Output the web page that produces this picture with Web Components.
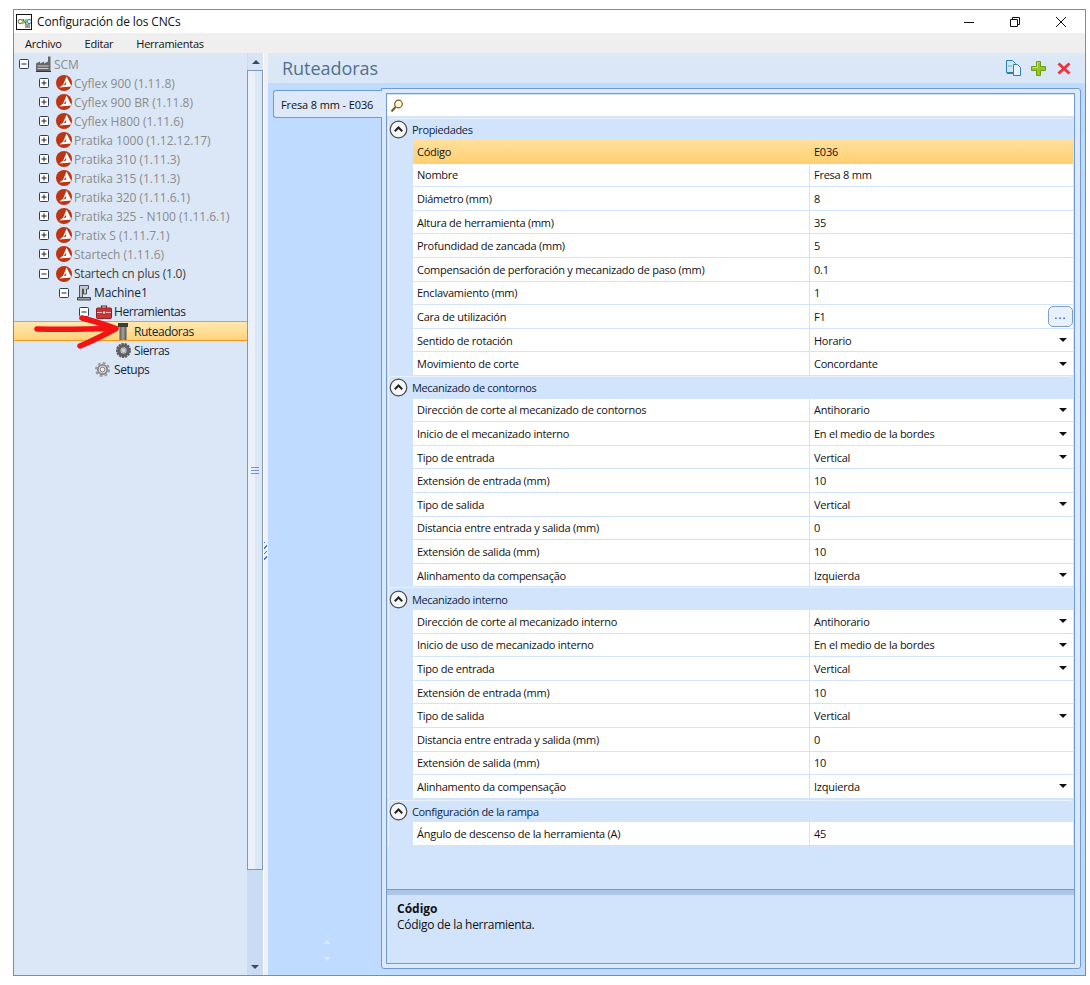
<!DOCTYPE html>
<html lang="es"><head><meta charset="utf-8"><title>Configuración de los CNCs</title>
<style>
html,body{margin:0;padding:0;background:#fff;overflow:hidden}
body{font-family:"Open Sans","Noto Sans","Liberation Sans",sans-serif;font-size:11px;color:#111}
</style></head><body>
<x-window>
  <x-titlebar slot="title">Configuración de los CNCs</x-titlebar>
  <x-menubar slot="menu"><span>Archivo</span><span>Editar</span><span>Herramientas</span></x-menubar>
  <x-tree slot="left">
    <x-node level="0" exp="minus" icon="factory" tone="off">SCM</x-node>
    <x-node level="1" exp="plus" icon="logo" tone="off">Cyflex 900 (1.11.8)</x-node>
    <x-node level="1" exp="plus" icon="logo" tone="off">Cyflex 900 BR (1.11.8)</x-node>
    <x-node level="1" exp="plus" icon="logo" tone="off">Cyflex H800 (1.11.6)</x-node>
    <x-node level="1" exp="plus" icon="logo" tone="off">Pratika 1000 (1.12.12.17)</x-node>
    <x-node level="1" exp="plus" icon="logo" tone="off">Pratika 310 (1.11.3)</x-node>
    <x-node level="1" exp="plus" icon="logo" tone="off">Pratika 315 (1.11.3)</x-node>
    <x-node level="1" exp="plus" icon="logo" tone="off">Pratika 320 (1.11.6.1)</x-node>
    <x-node level="1" exp="plus" icon="logo" tone="off">Pratika 325 - N100 (1.11.6.1)</x-node>
    <x-node level="1" exp="plus" icon="logo" tone="off">Pratix S (1.11.7.1)</x-node>
    <x-node level="1" exp="plus" icon="logo" tone="off">Startech (1.11.6)</x-node>
    <x-node level="1" exp="minus" icon="logo" tone="mid">Startech cn plus (1.0)</x-node>
    <x-node level="2" exp="minus" icon="machine">Machine1</x-node>
    <x-node level="3" exp="minus" icon="toolbox">Herramientas</x-node>
    <x-node level="4" icon="bit" selected>Ruteadoras</x-node>
    <x-node level="4" icon="saw">Sierras</x-node>
    <x-node level="3" icon="gear">Setups</x-node>
  </x-tree>
  <x-scrollbar slot="scroll"></x-scrollbar>
  <x-content slot="right" heading="Ruteadoras">
    <x-tab slot="tab">Fresa 8 mm - E036</x-tab>
    <x-group heading="Propiedades">
      <x-row selected>Código<span slot="value">E036</span></x-row>
      <x-row>Nombre<span slot="value">Fresa 8 mm</span></x-row>
      <x-row>Diámetro (mm)<span slot="value">8</span></x-row>
      <x-row>Altura de herramienta (mm)<span slot="value">35</span></x-row>
      <x-row>Profundidad de zancada (mm)<span slot="value">5</span></x-row>
      <x-row>Compensación de perforación y mecanizado de paso (mm)<span slot="value">0.1</span></x-row>
      <x-row>Enclavamiento (mm)<span slot="value">1</span></x-row>
      <x-row more>Cara de utilización<span slot="value">F1</span></x-row>
      <x-row drop>Sentido de rotación<span slot="value">Horario</span></x-row>
      <x-row drop>Movimiento de corte<span slot="value">Concordante</span></x-row>
    </x-group>
    <x-group heading="Mecanizado de contornos">
      <x-row drop>Dirección de corte al mecanizado de contornos<span slot="value">Antihorario</span></x-row>
      <x-row drop>Inicio de el mecanizado interno<span slot="value">En el medio de la bordes</span></x-row>
      <x-row drop>Tipo de entrada<span slot="value">Vertical</span></x-row>
      <x-row>Extensión de entrada (mm)<span slot="value">10</span></x-row>
      <x-row drop>Tipo de salida<span slot="value">Vertical</span></x-row>
      <x-row>Distancia entre entrada y salida (mm)<span slot="value">0</span></x-row>
      <x-row>Extensión de salida (mm)<span slot="value">10</span></x-row>
      <x-row drop>Alinhamento da compensação<span slot="value">Izquierda</span></x-row>
    </x-group>
    <x-group heading="Mecanizado interno">
      <x-row drop>Dirección de corte al mecanizado interno<span slot="value">Antihorario</span></x-row>
      <x-row drop>Inicio de uso de mecanizado interno<span slot="value">En el medio de la bordes</span></x-row>
      <x-row drop>Tipo de entrada<span slot="value">Vertical</span></x-row>
      <x-row>Extensión de entrada (mm)<span slot="value">10</span></x-row>
      <x-row drop>Tipo de salida<span slot="value">Vertical</span></x-row>
      <x-row>Distancia entre entrada y salida (mm)<span slot="value">0</span></x-row>
      <x-row>Extensión de salida (mm)<span slot="value">10</span></x-row>
      <x-row drop>Alinhamento da compensação<span slot="value">Izquierda</span></x-row>
    </x-group>
    <x-group heading="Configuración de la rampa" style="margin-top:.8px">
      <x-row>Ángulo de descenso de la herramienta (A)<span slot="value">45</span></x-row>
    </x-group>
    <x-desc slot="desc" heading="Código">Código de la herramienta.</x-desc>
  </x-content>
</x-window>
<script>
const FONT='"Open Sans","Noto Sans","Liberation Sans",sans-serif';
function comp(name,html){
  customElements.define(name,class extends HTMLElement{
    constructor(){super();this.attachShadow({mode:'open'}).innerHTML=typeof html==='function'?'':html;}
    connectedCallback(){ if(typeof html==='function') this.shadowRoot.innerHTML=html(this); }
  });
}
const ICONS={
factory:`<svg width="18" height="16" viewBox="0 0 18 16"><path d="M1 7.500l4-2v2l4-2v2l4-2V.5h2.500v14.500H1z" fill="#666"/><path d="M2.500 9.500h11v1h-11zM2.500 12h11v1h-11z" fill="#cfcfcf"/><path d="M1 15.500h15" stroke="#333"/></svg>`,
logo:`<svg width="16" height="16" viewBox="0 0 16 16"><circle cx="8" cy="8" r="8" fill="#bd3512"/><path d="M10.600 1.600L15.600 11.600 3.400 12.600 6.500 10l3.400-.3 .4-3-3.800 4.300z" fill="#fff"/></svg>`,
machine:`<svg width="16" height="16" viewBox="0 0 16 16"><path d="M3.500.5h9v3.500h-2v5h-3V4H6.500v8.500h-3z" fill="#c3c8ce" stroke="#4c5259"/><path d="M1.500 12.500h13v2.500h-13z" fill="#9aa0a8" stroke="#41464d"/></svg>`,
toolbox:`<svg width="16" height="16" viewBox="0 0 16 16" style="margin-right:1px"><path d="M5.500 4V2h5v2" fill="none" stroke="#7c2020" stroke-width="1.200"/><rect x=".5" y="4" width="15" height="10.500" rx="1" fill="#c8353a" stroke="#8c2227"/><path d="M1 8.500h14" stroke="#f5b5b5"/><rect x="6.500" y="7" width="3" height="3" fill="#e8d9b0" stroke="#7c2020" stroke-width=".6"/></svg>`,
bit:`<svg width="10" height="17" viewBox="0 0 10 17" style="margin:1px 2px 0 0"><defs><linearGradient id="b" x1="0" x2="1"><stop offset="0" stop-color="#555"/><stop offset=".5" stop-color="#a2a2a2"/><stop offset="1" stop-color="#505050"/></linearGradient></defs><rect x="0" y="0" width="10" height="4" fill="#3c3c3c"/><rect x="1.500" y="4" width="7" height="13" fill="url(#b)"/></svg>`,
saw:`<svg width="15" height="15" viewBox="0 0 16 16" style="margin-right:1px"><circle cx="8" cy="8" r="5" fill="none" stroke="#626262" stroke-width="3.600"/><circle cx="8" cy="8" r="7" fill="none" stroke="#5a5a5a" stroke-width="2" stroke-dasharray="2.400 1"/><path d="M8 4.500a3.500 3.500 0 0 1 3 1.700" fill="none" stroke="#a5a5a5"/><circle cx="8" cy="8" r="2.400" fill="#cdd7e4" stroke="#808080" stroke-width=".6"/></svg>`,
gear:`<svg width="15" height="15" viewBox="0 0 16 16" style="margin-right:3px"><circle cx="8" cy="8" r="5" fill="#d8d8d8" stroke="#8a8a8a" stroke-width="2"/><circle cx="8" cy="8" r="7" fill="none" stroke="#9a9a9a" stroke-width="2" stroke-dasharray="3 2.500"/><circle cx="8" cy="8" r="2.500" fill="#eaeff6" stroke="#7e7e7e"/></svg>`
};
comp('x-window',`<style>
:host{display:block;box-sizing:border-box;width:1073px;height:967px;margin:9px 0 0 13px;border:1px solid #8a8a8a;background:#f0f0f0;position:relative;font-family:${FONT}}
.wrap{display:flex;flex-direction:column;height:100%}
.main{flex:1;display:flex;min-height:0}
.left{width:233px;flex:none;display:flex}
.sb{width:17px;flex:none;display:flex}
.split{width:4px;flex:none;position:relative;background:#f0f0f0}
.dots{position:absolute;left:0;top:489px;width:3px;height:19px;background:repeating-linear-gradient(135deg,#3a78d0 0 1px,transparent 1px 4px)}
.right{flex:1;min-width:0;display:flex}
.arrow{position:absolute;left:20px;top:301px;pointer-events:none}
</style><div class="wrap"><slot name="title"></slot><slot name="menu"></slot>
<div class="main"><div class="left"><slot name="left"></slot></div><div class="sb"><slot name="scroll"></slot></div><div class="split"><div class="dots"></div></div><div class="right"><slot name="right"></slot></div></div></div>
<svg class="arrow" width="90" height="40" viewBox="0 0 90 40"><path d="M3 18C30 18.500 60 18 80 17.500" fill="none" stroke="#f01414" stroke-width="5.500" stroke-linecap="round"/><path d="M48 7C60 10 72 14 82 17.500 72 23 58 30 46 35" fill="none" stroke="#f01414" stroke-width="5.500" stroke-linecap="round" stroke-linejoin="round"/></svg>`);
comp('x-titlebar',`<style>
:host{display:flex;align-items:center;height:23px;background:#fff;font-size:12px;letter-spacing:-.15px;color:#111;flex:none}
.ic{margin:0 5px 0 2px;width:16px;height:16px;display:block}
.t{flex:1}
.btns{display:flex;width:139px;height:23px}
.btns div{width:46px;display:flex;align-items:center;justify-content:center}
</style><svg class="ic" viewBox="0 0 16 16"><rect x=".5" y=".5" width="15" height="15" fill="#fff" stroke="#111"/><text x="1.500" y="9.500" font-family="Liberation Sans" font-size="6.500" font-weight="700" fill="#1a7a28">CNC</text><rect x="9" y="10" width="5" height="4" fill="#9a9a9a"/></svg><div class="t"><slot></slot></div>
<div class="btns"><div><svg width="10" height="10"><path d="M0 5.500h10" stroke="#111"/></svg></div><div><svg width="10" height="10"><path d="M.5 2.500h7v7h-7zM2.500 2.500v-2h7v7h-2" fill="none" stroke="#111"/></svg></div><div><svg width="10" height="10"><path d="M0 0l10 10M10 0L0 10" stroke="#111"/></svg></div></div>`);
comp('x-menubar',`<style>
:host{display:flex;align-items:center;height:20px;background:#efefef;font-size:11px;letter-spacing:-.25px;color:#111;flex:none;padding-left:11px;gap:23px}
::slotted(span){display:block}
</style><slot></slot>`);
comp('x-tree',`<style>
:host{display:block;flex:1;background:#dbe7f6;padding-top:1.500px;font-size:12px;letter-spacing:-.02px}
</style><slot></slot>`);
comp('x-node',el=>{
  const lv=+el.getAttribute('level')||0, e=el.getAttribute('exp'), ic=el.getAttribute('icon'), tone=el.getAttribute('tone');
  const sel=el.hasAttribute('selected');
  const col=tone==='off'?'#8b8b8b':tone==='mid'?'#3c3c3c':'#14263c';
  const ls=lv>=3?'-.45px':lv===2?'-.1px':tone==='mid'?'-.22px':'-.03px';
  const ex=e?`<svg width="10" height="10" viewBox="0 0 10 10"><rect x=".5" y=".5" width="9" height="9" rx="1" fill="#fff" stroke="#2d3f55"/><path d="M2.500 5h5${e==='plus'?'M5 2.500v5':''}" stroke="#222"/></svg>`:'';
  return `<style>
  :host{display:block;height:${sel?'20px':'19.060px'};letter-spacing:${ls}}
  .r{box-sizing:border-box;display:flex;align-items:center;height:100%;padding-left:${lv*20}px;color:${col};white-space:nowrap;${sel?'background:linear-gradient(#ffe9b0,#ffd27c);border-top:1px solid #f39c1f;border-bottom:1px solid #f39c1f;':''}}
  .s{width:20px;display:flex;justify-content:center;flex:none}
  .i{width:20px;display:flex;justify-content:center;flex:none}
  svg{display:block}
  </style><div class="r"><div class="s">${ex}</div><div class="i">${ICONS[ic]||''}</div><slot></slot></div>`;
});
comp('x-scrollbar',`<style>
:host{display:flex;flex-direction:column;width:17px;box-sizing:border-box;background:#c9dcf3;border-right:1px solid #fff}
.top{height:17px;display:flex;align-items:center;justify-content:center;background:#d6e4f5;border-left:1px solid #c9dcf3}
.th{box-sizing:border-box;height:800px;background:linear-gradient(90deg,#eaf1fc 0 50%,#dbe7f6 50%);border:1px solid #7f97bb;display:flex;align-items:center;justify-content:center}
.g{width:8px;height:5px;border-top:1px solid #6f94c8;border-bottom:1px solid #6f94c8;position:relative}
.g:after{content:"";position:absolute;left:0;right:0;top:2px;height:1px;background:#6f94c8}
.sp{flex:1}
.bot{height:17px;display:flex;align-items:center;justify-content:center}
i{display:block;width:0;height:0;border:4px solid transparent}
.u{border-bottom-color:#3c4a5c;border-top:0}.d{border-top-color:#3c4a5c;border-bottom:0}
</style><div class="top"><i class="u"></i></div><div class="th"><div class="g"></div></div><div class="sp"></div><div class="bot"><i class="d"></i></div>`);
comp('x-content',el=>`<style>
:host{display:flex;flex-direction:column;flex:1;min-width:0;background:#bfdbff}
.hd{height:30px;flex:none;display:flex;align-items:center;background:linear-gradient(#dee9f7,#d9e6f6);padding:0 14px;justify-content:space-between}
h1{margin:0;font-weight:400;font-size:18px;letter-spacing:-.05px;color:#50708f}
.tools{display:flex;gap:10px;align-items:center}
.tools svg{display:block}
.body{flex:1;display:flex;min-height:0;padding:5px 4px 6px 5px}
.tabs{width:108px;flex:none;display:flex;flex-direction:column;padding-top:2px;position:relative;z-index:1}
.ud{margin-top:auto;margin-bottom:8px;align-self:center;display:flex;flex-direction:column;gap:13px}
.ud i{display:block;width:0;height:0;border:4px solid transparent}
.up{border-bottom-color:#d8e7fb !important;border-top:0 !important}.dn{border-top-color:#d8e7fb !important;border-bottom:0 !important}
.outer{flex:1;min-width:0;box-sizing:border-box;border:1px solid #6f9ad8;border-radius:0 3px 3px 3px;background:#dde9f8;padding:4px 5px 4px 4px;display:flex}
.frame{flex:1;min-width:0;box-sizing:border-box;border:1px solid #6f9ad8;background:#d2e4fb;display:flex;flex-direction:column}
.search{height:21px;margin:1px 0 0 0;background:#fff;display:flex;align-items:center;padding-left:3px;flex:none}
.search svg{display:block}
.grid{flex:1;min-height:0;padding:1.500px 1px 0 1px}
</style>
<div class="hd"><h1>${el.getAttribute('heading')}</h1><div class="tools">
<svg width="16" height="16" viewBox="0 0 16 16" style="margin-right:-1px"><path d="M.5.5h6l3 3v9h-9z" fill="#cfe6f2" stroke="#2d7fb0"/><path d="M1 13.500h9" stroke="#2d7fb0"/><path d="M7.500 4.500h4l3 3v8h-7z" fill="#e4f2f8" stroke="#2d7fb0"/><path d="M2 5h4v2H2z" fill="#9cc8de"/></svg>
<svg width="15" height="15" viewBox="0 0 15 15"><path d="M5.500.5h4v5h5v4h-5v5h-4v-5h-5v-4h5z" fill="#94c81e" stroke="#6f9a1a"/><path d="M1.500 6.500h5v-5h2" fill="none" stroke="#c8e670"/></svg>
<svg width="14" height="13" viewBox="0 0 14 13" style="margin-left:1px"><path d="M1.500 1.500l11 10M12.500 1.500l-11 10" stroke="#f0303c" stroke-width="3"/></svg>
</div></div>
<div class="body"><div class="tabs"><slot name="tab"></slot><div class="ud"><i class="up"></i><i class="dn"></i></div></div>
<div class="outer"><div class="frame"><div class="search"><svg width="14" height="14" viewBox="0 0 14 14"><circle cx="8.500" cy="5" r="3.800" fill="#fdf6d8" stroke="#7a5a22" stroke-width="1.200"/><path d="M5.500 8L1.500 12.500" stroke="#7a5a22" stroke-width="2"/></svg></div>
<div class="grid"><slot></slot></div><slot name="desc"></slot></div></div></div>`);
comp('x-tab',`<style>
:host{display:flex;align-items:center;box-sizing:border-box;height:28px;margin-right:-1px;padding-left:7px;background:#dde9f8;border:1px solid #6f9ad8;border-right:0;border-radius:3px 0 0 3px;font-size:11px;letter-spacing:-.12px;white-space:nowrap;color:#111}
</style><slot></slot>`);
comp('x-group',el=>`<style>
:host{display:block;box-sizing:border-box;background:#d2e4fb;border-top:1px solid #eaf2fd;border-left:1px solid #eaf2fd;border-radius:4px 4px 0 0}
.h{box-sizing:border-box;height:21.600px;display:flex;align-items:center;gap:4px;padding-left:0;font-size:11px;letter-spacing:-.35px;color:#10253e}
svg{display:block}
.rows{display:flex;flex-direction:column}
</style><div class="h"><svg width="19" height="19" viewBox="0 0 19 19"><circle cx="9.500" cy="9.500" r="8.300" fill="#f4f6f8" stroke="#4a4a4a" stroke-width="1.200"/><path d="M5.800 11.200L9.500 7.500l3.700 3.700" fill="none" stroke="#222" stroke-width="2"/></svg><span>${el.getAttribute('heading')}</span></div><div class="rows"><slot></slot></div>`);
comp('x-row',el=>{
  const sel=el.hasAttribute('selected');
  return `<style>
  :host{display:block;height:23.600px;margin-left:24px;font-size:11px;letter-spacing:-.25px;color:#111}
  .r{box-sizing:border-box;height:100%;display:flex;align-items:center;background:${sel?'linear-gradient(#ffe09c,#ffcf70)':'#fff'};${sel?'':'border-bottom:1px solid #d2e4fb;'}position:relative}
  .n{width:397px;flex:none;box-sizing:border-box;padding-left:4px;height:100%;display:flex;align-items:center;${sel?'':'border-right:1px solid #d2e4fb;'}white-space:nowrap;overflow:hidden}
  .v{flex:1;padding-left:4px;white-space:nowrap}
  .d{width:0;height:0;border:4px solid transparent;border-top:4px solid #111;border-bottom:0;margin-right:6px}
  .m{position:absolute;right:0;top:1px;box-sizing:border-box;width:25px;height:21px;background:#e8f0fb;border:1px solid #7f9fcb;border-radius:5px;font-size:12px;line-height:16px;text-align:center;color:#444;letter-spacing:1px}
  </style><div class="r"><div class="n"><slot></slot></div><div class="v"><slot name="value"></slot></div>${el.hasAttribute('drop')?'<div class="d"></div>':''}${el.hasAttribute('more')?'<div class="m">...</div>':''}</div>`;
});
comp('x-desc',el=>`<style>
:host{display:block;box-sizing:border-box;height:74px;flex:none;border-top:1px solid #6f9ad8;background:#d2e4fb;font-size:11px;color:#111}
.band{height:5px;background:#adc6e6}
.c{padding:6px 10px}
b{display:block;font-weight:700;font-size:12px;line-height:16px}
.t{line-height:16px;font-size:12px;letter-spacing:-.3px}
</style><div class="band"></div><div class="c"><b>${el.getAttribute('heading')}</b><div class="t"><slot></slot></div></div>`);
</script>
</body></html>
